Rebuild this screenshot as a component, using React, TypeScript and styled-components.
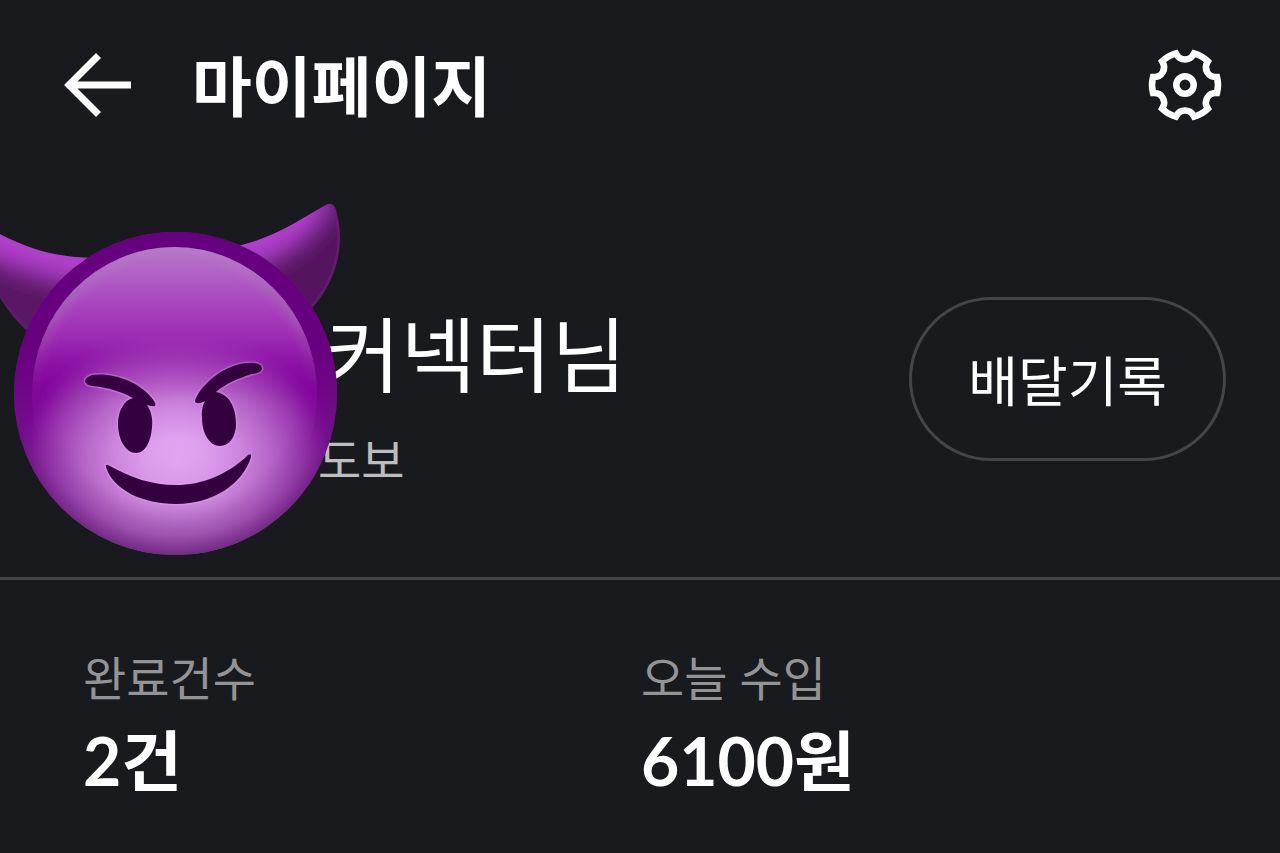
import React from "react";
import styled, { createGlobalStyle } from "styled-components";

const GlobalStyle = createGlobalStyle`
  * { box-sizing: border-box; }
  body {
    margin: 0;
    background: #191a1d;
    color: #ffffff;
    font-family: "Lato", "Noto Sans CJK KR", sans-serif;
  }
`;

const Page = styled.main`
  min-height: 100vh;
  overflow: hidden;
  background: #191a1d;
`;

const Header = styled.header`
  display: flex;
  align-items: center;
  gap: 58px;
  padding: 35px 56px 37px 60px;
`;

const Title = styled.h1`
  flex: 1;
  margin: 0;
  padding-top: 2px;
  font-size: 65px;
  line-height: 98px;
  font-weight: 700;
`;

const IconButton = styled.button`
  display: flex;
  padding: 0;
  border: 0;
  background: none;
  color: inherit;
  cursor: pointer;
`;

const Profile = styled.section`
  position: relative;
  display: flex;
  align-items: flex-start;
  justify-content: space-between;
  padding: 125px 54px 87px 318px;
  border-bottom: 3px solid #454547;
`;

const Avatar = styled.svg`
  position: absolute;
  left: 0;
  top: 28px;
`;

const Identity = styled.div`
  padding-top: 10px;
`;

const Name = styled.h2`
  margin: 0;
  padding-left: 7px;
  font-size: 82px;
  line-height: 94px;
  font-weight: 400;
`;

const Transport = styled.p`
  margin: 29px 0 0;
  font-size: 47px;
  line-height: 60px;
  color: #bdbdbf;
`;

const HistoryButton = styled.button`
  padding: 39px 56px 33px;
  border: 3px solid #454547;
  border-radius: 82px;
  background: none;
  color: inherit;
  font: inherit;
  font-size: 54px;
  line-height: 86px;
  cursor: pointer;
`;

const Stats = styled.dl`
  display: grid;
  grid-template-columns: 1fr 1fr;
  margin: 0;
  padding: 66px 81px 40px 83px;
`;

const StatLabel = styled.dt`
  font-size: 47px;
  line-height: 64px;
  color: #949496;
`;

const StatValue = styled.dd`
  margin: 7px 0 0;
  font-size: 66px;
  line-height: 88px;
  font-weight: 700;
`;

const gearOutline = () => {
  const at = (x: number, y: number, turn: number) => {
    const a = (turn * Math.PI) / 3;
    const px = x * Math.cos(a) - y * Math.sin(a);
    const py = x * Math.sin(a) + y * Math.cos(a);
    return `${px.toFixed(2)} ${py.toFixed(2)}`;
  };
  let d = `M${at(32, -8, 0)}`;
  for (let i = 0; i < 6; i++) {
    d += `A33 33 0 0 1 ${at(32, 8, i)}`;
    d += `L${at(30.5, 8, i)}`;
    d += `A9.6 9.6 0 0 0 ${at(30.5, -8, i + 1)}`;
    d += `L${at(32, -8, i + 1)}`;
  }
  return d + "Z";
};

const ArrowIcon = () => (
  <svg width="74" height="70" viewBox="60 50 74 70" fill="none" stroke="currentColor" strokeWidth="7" aria-hidden="true">
    <path d="M98.500 55.500 69 85 98.500 114.500M69 85H131" />
  </svg>
);

const GearIcon = () => (
  <svg width="78" height="78" viewBox="-39 -39 78 78" fill="none" stroke="currentColor" strokeWidth="6.500" aria-hidden="true">
    <path d={gearOutline()} />
    <circle r="8.700" />
  </svg>
);

const DevilFace = () => (
  <Avatar width="344" height="360" viewBox="0 200 344 360" role="img" aria-label="프로필">
    <defs>
      <radialGradient id="head" gradientUnits="userSpaceOnUse" cx="0" cy="0" r="1" gradientTransform="translate(177 462) scale(158 134)">
        <stop offset="0" stopColor="#e5a8f3" />
        <stop offset="0.2" stopColor="#df9fee" />
        <stop offset="0.4" stopColor="#cf87df" />
        <stop offset="0.6" stopColor="#b664c8" />
        <stop offset="0.8" stopColor="#9a38b0" />
        <stop offset="0.94" stopColor="#870fa0" />
        <stop offset="1" stopColor="#82029c" />
      </radialGradient>
      <linearGradient id="shade" x1="0" y1="440" x2="0" y2="555" gradientUnits="userSpaceOnUse">
        <stop offset="0" stopColor="#8a5098" stopOpacity="0" />
        <stop offset="0.5" stopColor="#8a5098" stopOpacity="0.12" />
        <stop offset="1" stopColor="#8a5098" stopOpacity="0.35" />
      </linearGradient>
      <radialGradient id="edge" gradientUnits="userSpaceOnUse" cx="175.500" cy="384" r="172">
        <stop offset="0.72" stopColor="#6a2080" stopOpacity="0" />
        <stop offset="0.88" stopColor="#6a2080" stopOpacity="0.25" />
        <stop offset="1" stopColor="#5c1a6c" stopOpacity="0.7" />
      </radialGradient>
      <linearGradient id="rim" x1="0" y1="232" x2="0" y2="450" gradientUnits="userSpaceOnUse">
        <stop offset="0" stopColor="#66007e" />
        <stop offset="0.5" stopColor="#66007e" />
        <stop offset="0.7" stopColor="#68007f" stopOpacity="0.65" />
        <stop offset="1" stopColor="#6c1080" stopOpacity="0" />
      </linearGradient>
      <linearGradient id="gloss" x1="0" y1="247" x2="0" y2="400" gradientUnits="userSpaceOnUse">
        <stop offset="0" stopColor="#b777c7" />
        <stop offset="0.2" stopColor="#b05fc5" />
        <stop offset="0.42" stopColor="#a640bc" />
        <stop offset="0.6" stopColor="#a234b8" stopOpacity="0.8" />
        <stop offset="0.8" stopColor="#9c29b3" stopOpacity="0.3" />
        <stop offset="1" stopColor="#9010a9" stopOpacity="0" />
      </linearGradient>
      <linearGradient id="sheen" x1="0" y1="247" x2="0" y2="390" gradientUnits="userSpaceOnUse">
        <stop offset="0" stopColor="#b886c4" stopOpacity="0.3" />
        <stop offset="0.5" stopColor="#a067ad" stopOpacity="0.6" />
        <stop offset="1" stopColor="#8d2ca0" stopOpacity="0" />
      </linearGradient>
      <clipPath id="rightHornClip">
        <path d="M238 246C275 237 298 221 324 206Q333 200 336 210C345 242 339 278 312 308L270 290Z" />
      </clipPath>
      <clipPath id="leftHornClip">
        <path d="M-8 230C22 246 50 257 92 258L60 300 26 330C14 318 5 308 -4 290L-14 270Z" />
      </clipPath>
      <filter id="fine" x="-30%" y="-30%" width="160%" height="160%">
        <feGaussianBlur stdDeviation="4" />
      </filter>
      <filter id="glow" filterUnits="userSpaceOnUse" x="-60" y="150" width="460" height="260">
        <feGaussianBlur stdDeviation="12" />
      </filter>
      <clipPath id="glossClip">
        <ellipse cx="174.500" cy="394" rx="142.500" ry="147" />
      </clipPath>
    </defs>

    <g clipPath="url(#leftHornClip)">
      <rect x="-20" y="220" width="130" height="120" fill="#5a1764" />
      <path d="M-40 210C22 242 50 254 130 262" fill="none" stroke="#b03fcc" strokeWidth="60" filter="url(#glow)" />
      <path d="M-14 280C0 305 12 318 30 332" fill="none" stroke="#7d2a8b" strokeOpacity="0.4" strokeWidth="4" filter="url(#fine)" />
    </g>
    <g clipPath="url(#rightHornClip)">
      <rect x="230" y="195" width="120" height="120" fill="#54145e" />
      <path d="M205 256C275 238 290 222 314 186" fill="none" stroke="#b03fcc" strokeWidth="54" filter="url(#glow)" />
      <path d="M338 220C343 246 336 280 312 307" fill="none" stroke="#7d2a8b" strokeOpacity="0.35" strokeWidth="4" />
    </g>

    <circle cx="175.500" cy="393.500" r="161.500" fill="url(#head)" />
    <circle cx="175.500" cy="393.500" r="161.500" fill="url(#shade)" />
    <circle cx="175.500" cy="393.500" r="161.500" fill="url(#edge)" />
    <path
      fill="url(#rim)"
      fillRule="evenodd"
      d="M14 393.500A161.500 161.500 0 0 1 337 393.500A161.500 161.500 0 0 1 14 393.500ZM32 394A142.500 147 0 0 0 317 394A142.500 147 0 0 0 32 394Z"
    />
    <g clipPath="url(#glossClip)">
      <rect x="30" y="245" width="290" height="160" fill="url(#gloss)" />
      <ellipse cx="174.500" cy="394" rx="142" ry="147" fill="none" stroke="url(#sheen)" strokeWidth="14" filter="url(#fine)" />
    </g>

    <g fill="#35003f" stroke="#e3a9ee" strokeOpacity="0.35" strokeWidth="3" paintOrder="stroke" strokeLinejoin="round">
      <path d="M92 375C113 372 139 382 151 397Q157 404 155 406Q153 407 147 405C151 411 153 418 152 427C151 442 145 453 136 453C126 453 118 440 118 424C118 411 124 400 133 398C120 391 109 388 93 386Q85 385 85 381Q86 377 92 375Z" />
      <path d="M255 363Q262 364 262 369Q261 373 252 374C239 378 225 384 216 392C229 394 236 407 236 424C236 437 229 446 220 446C210 446 202 434 202 418Q201 408 205 401Q198 405 195 402Q195 399 198 394C211 374 235 361 255 363Z" />
      <path d="M108 465Q105 464 106 467C113 490 143 504 176 504C213 504 243 484 251 457Q252 453 248 455C227 475 202 485 176 485C152 485 131 478 108 465Z" />
    </g>
  </Avatar>
);

const App = () => (
  <>
    <GlobalStyle />
    <Page>
      <Header>
        <IconButton type="button" aria-label="뒤로">
          <ArrowIcon />
        </IconButton>
        <Title>마이페이지</Title>
        <IconButton type="button" aria-label="설정">
          <GearIcon />
        </IconButton>
      </Header>
      <Profile>
        <Identity>
          <Name>커넥터님</Name>
          <Transport>도보</Transport>
        </Identity>
        <HistoryButton type="button">배달기록</HistoryButton>
        <DevilFace />
      </Profile>
      <Stats>
        <div>
          <StatLabel>완료건수</StatLabel>
          <StatValue>2건</StatValue>
        </div>
        <div>
          <StatLabel>오늘 수입</StatLabel>
          <StatValue>6100원</StatValue>
        </div>
      </Stats>
    </Page>
  </>
);

export default App;
